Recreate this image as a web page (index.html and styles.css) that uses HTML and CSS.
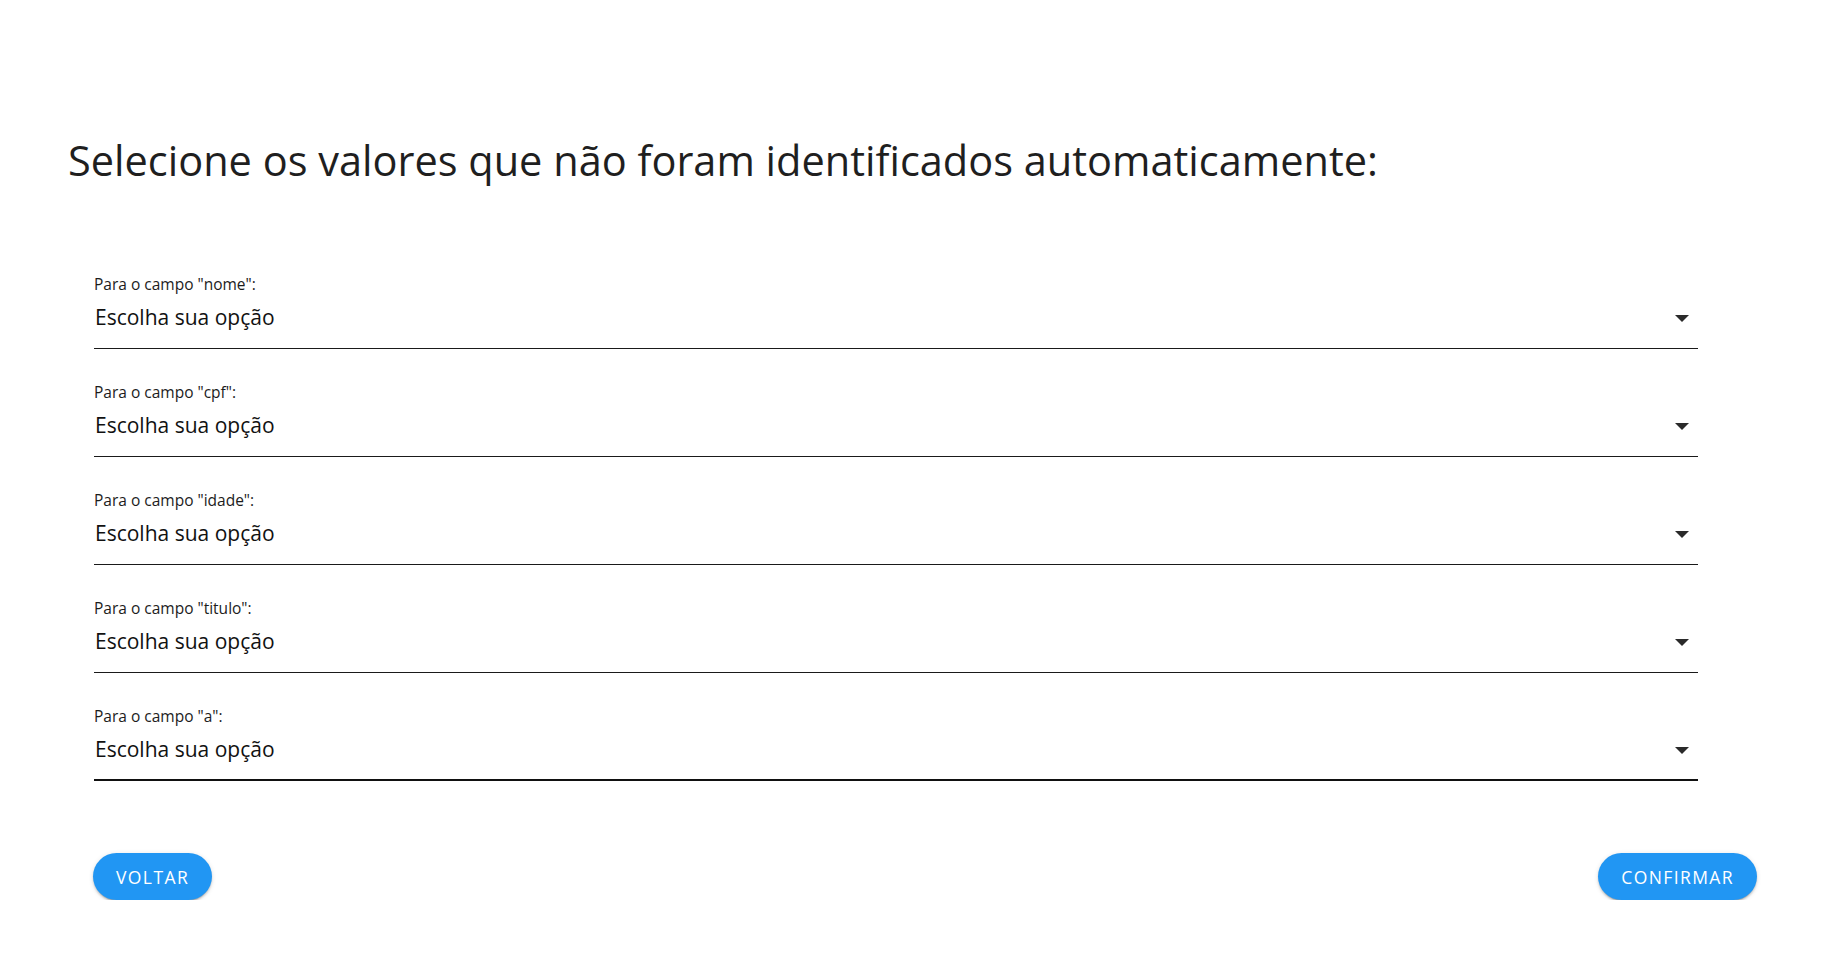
FILE: index.html
```html
<!DOCTYPE html>
<html lang="pt">
<head>
<meta charset="utf-8">
<title>Selecione os valores</title>
<link rel="stylesheet" href="styles.css">
</head>
<body>
<main class="page">
  <h1 class="title">Selecione os valores que não foram identificados automaticamente:</h1>
  <form class="form">
    <div class="field">
      <label class="label">Para o campo "nome":</label>
      <div class="select"><span class="value">Escolha sua opção</span><svg class="arrow" width="14" height="7" viewBox="0 0 14 7"><path d="M0 0h14L7 7z"/></svg></div>
    </div>
    <div class="field">
      <label class="label">Para o campo "cpf":</label>
      <div class="select"><span class="value">Escolha sua opção</span><svg class="arrow" width="14" height="7" viewBox="0 0 14 7"><path d="M0 0h14L7 7z"/></svg></div>
    </div>
    <div class="field">
      <label class="label">Para o campo "idade":</label>
      <div class="select"><span class="value">Escolha sua opção</span><svg class="arrow" width="14" height="7" viewBox="0 0 14 7"><path d="M0 0h14L7 7z"/></svg></div>
    </div>
    <div class="field">
      <label class="label">Para o campo "titulo":</label>
      <div class="select"><span class="value">Escolha sua opção</span><svg class="arrow" width="14" height="7" viewBox="0 0 14 7"><path d="M0 0h14L7 7z"/></svg></div>
    </div>
    <div class="field field-active">
      <label class="label">Para o campo "a":</label>
      <div class="select"><span class="value">Escolha sua opção</span><svg class="arrow" width="14" height="7" viewBox="0 0 14 7"><path d="M0 0h14L7 7z"/></svg></div>
    </div>
  </form>
  <div class="actions">
    <button class="btn" type="button">Voltar</button>
    <button class="btn" type="button">Confirmar</button>
  </div>
</main>
</body>
</html>
```

FILE: styles.css
```css
html, body {
  margin: 0;
  padding: 0;
  background: #ffffff;
}

body {
  font-family: "Open Sans", "Noto Sans", sans-serif;
  color: rgba(0, 0, 0, 0.87);
}

.page {
  padding: 130px 90px 0 68px;
}

.title {
  margin: 0;
  font-size: 41.5px;
  font-weight: 400;
  line-height: 60px;
  color: #1f1f1f;
}

.form {
  margin: 84px 0 0 26px;
  width: 1604px;
  display: flex;
  flex-direction: column;
  gap: 33px;
}

.field {
  display: flex;
  flex-direction: column;
}

.label {
  font-size: 15.5px;
  line-height: 20px;
  color: #1c1c1c;
}

.select {
  box-sizing: border-box;
  display: flex;
  align-items: flex-start;
  justify-content: space-between;
  height: 55px;
  border-bottom: 1px solid #1a1a1a;
  padding: 9px 9px 0 1px;
}

.field-active .select {
  border-bottom: 2px solid #111;
}

.value {
  font-size: 21px;
  line-height: 28px;
  color: #111;
}

.arrow {
  margin-top: 12px;
  fill: #2a2a2a;
}

.actions {
  margin: 72px 0 0 25px;
  width: 1664px;
  display: flex;
  justify-content: space-between;
}

.btn {
  font-family: "Open Sans", "Noto Sans", sans-serif;
  height: 47px;
  padding: 0 23px;
  border: none;
  border-radius: 24px;
  background: #2196f3;
  color: #fff;
  font-size: 17.5px;
  font-weight: 500;
  text-transform: uppercase;
  letter-spacing: 1.4px;
  box-shadow: 0 3px 1px -2px rgba(0,0,0,.2), 0 2px 2px 0 rgba(0,0,0,.14), 0 1px 5px 0 rgba(0,0,0,.12);
  cursor: pointer;
}
```
